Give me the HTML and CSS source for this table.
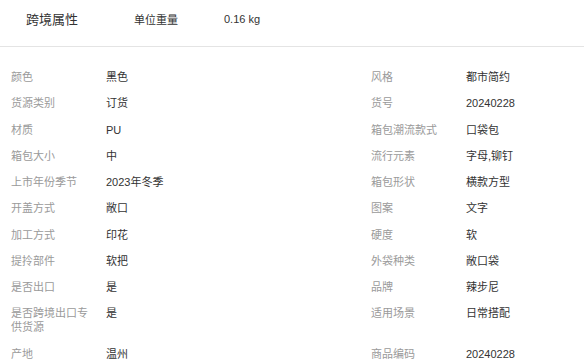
FILE: index.html
```html
<!DOCTYPE html>
<html lang="zh-CN">
<head>
<meta charset="utf-8">
<link rel="stylesheet" href="styles.css">
</head>
<body>
<div class="head">
  <div class="head-title">跨境属性</div>
  <div class="head-label">单位重量</div>
  <div class="head-value">0.16 kg</div>
</div>
<div class="attrs">
  <div class="k">颜色</div><div class="v">黑色</div><div class="k">风格</div><div class="v">都市简约</div>
  <div class="k">货源类别</div><div class="v">订货</div><div class="k">货号</div><div class="v">20240228</div>
  <div class="k">材质</div><div class="v">PU</div><div class="k">箱包潮流款式</div><div class="v">口袋包</div>
  <div class="k">箱包大小</div><div class="v">中</div><div class="k">流行元素</div><div class="v">字母,铆钉</div>
  <div class="k">上市年份季节</div><div class="v">2023年冬季</div><div class="k">箱包形状</div><div class="v">横款方型</div>
  <div class="k">开盖方式</div><div class="v">敞口</div><div class="k">图案</div><div class="v">文字</div>
  <div class="k">加工方式</div><div class="v">印花</div><div class="k">硬度</div><div class="v">软</div>
  <div class="k">提拎部件</div><div class="v">软把</div><div class="k">外袋种类</div><div class="v">敞口袋</div>
  <div class="k">是否出口</div><div class="v">是</div><div class="k">品牌</div><div class="v">辣步尼</div>
  <div class="k">是否跨境出口专供货源</div><div class="v">是</div><div class="k">适用场景</div><div class="v">日常搭配</div>
  <div class="k">产地</div><div class="v">温州</div><div class="k">商品编码</div><div class="v">20240228</div>
</div>
</body>
</html>
```
FILE: styles.css
```css
html, body {
  margin: 0;
  padding: 0;
  background: #fff;
  overflow: hidden;
}
body {
  font-family: "Liberation Sans", "Noto Sans CJK SC", sans-serif;
  color: #333;
}
.head {
  display: flex;
  align-items: center;
  height: 47px;
  padding-left: 26px;
  padding-bottom: 9px;
  box-sizing: border-box;
  border-bottom: 1px solid #e4e4e4;
}
.head-title {
  width: 108px;
  font-size: 13px;
  color: #333;
}
.head-label {
  width: 90px;
  font-size: 11px;
  color: #333;
}
.head-value {
  font-size: 11px;
  color: #333;
}
.attrs {
  display: grid;
  grid-template-columns: 95px 265px 95px 1fr;
  padding: 17px 0 0 11px;
  font-size: 11px;
  line-height: 14px;
}
.k, .v {
  padding: 6px 0 6.25px;
}
.k {
  color: #9a9a9a;
  padding-right: 10px;
}
.v {
  color: #333;
}
```
